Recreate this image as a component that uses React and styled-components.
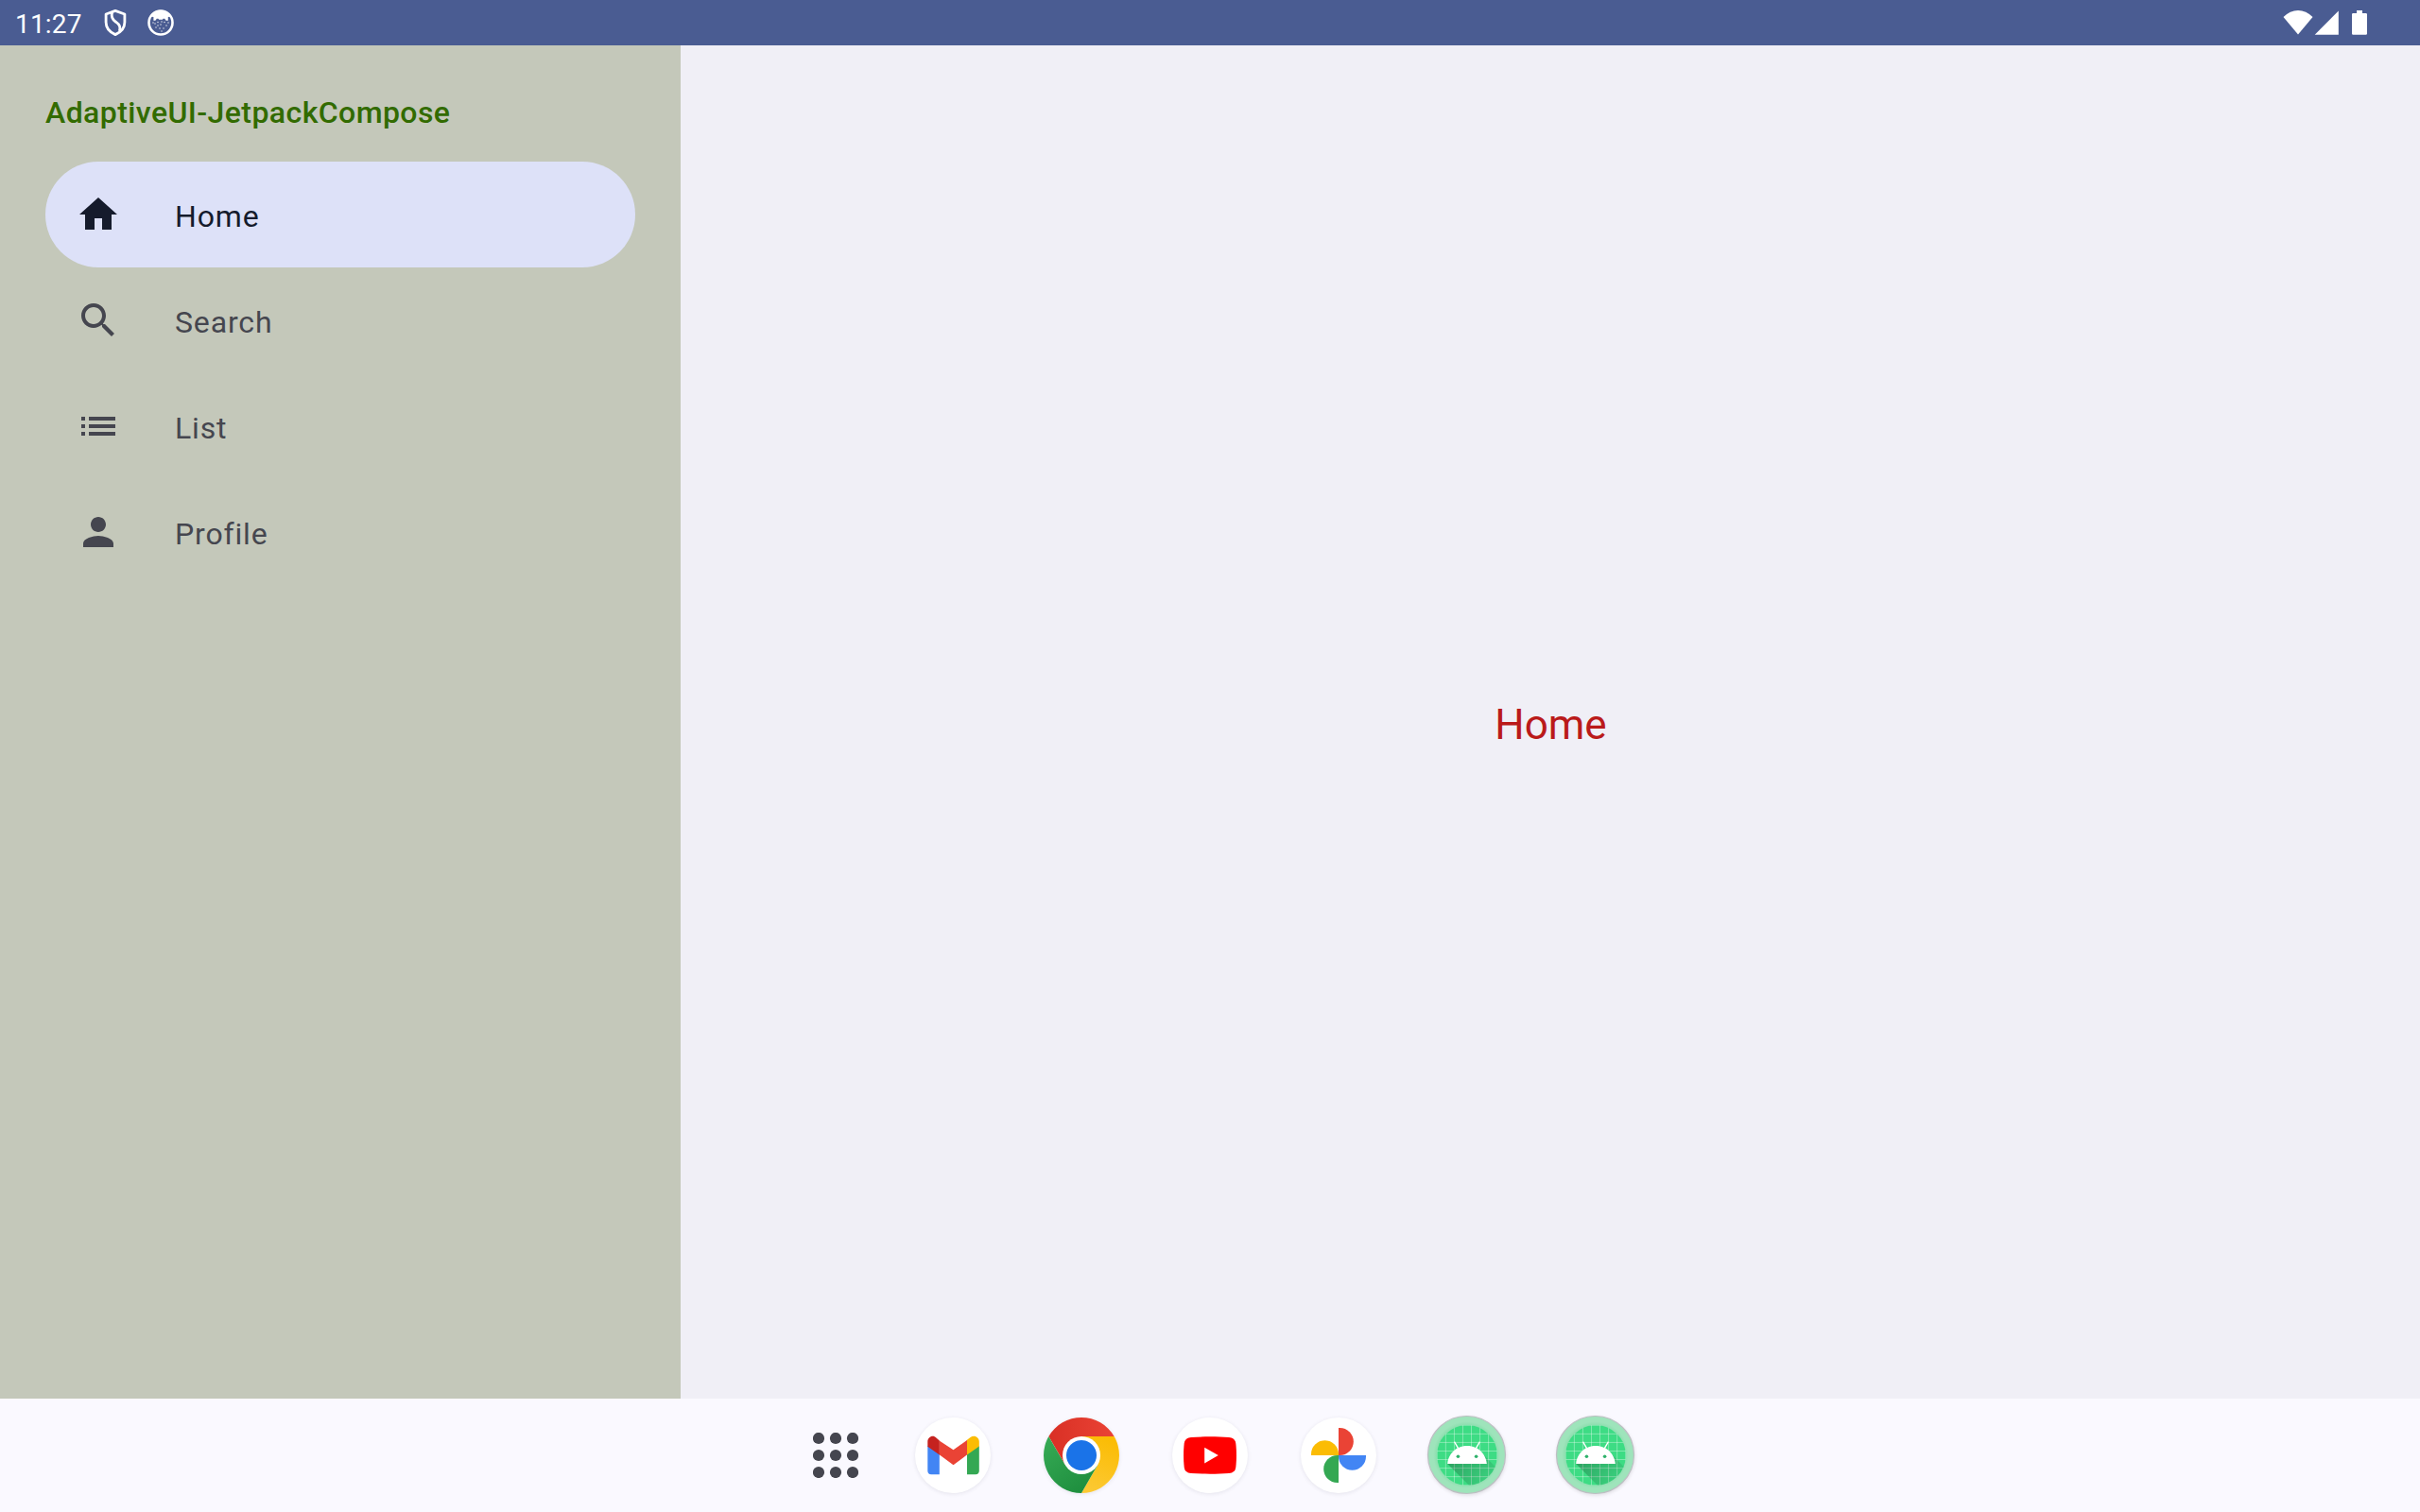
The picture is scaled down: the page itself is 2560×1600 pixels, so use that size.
import React from "react";
import styled, { createGlobalStyle } from "styled-components";

const GlobalStyle = createGlobalStyle`
  * { box-sizing: border-box; }
  body {
    margin: 0;
    font-family: Roboto, "Noto Sans", sans-serif;
    overflow: hidden;
  }
  svg { display: block; flex: none; }
`;

const Screen = styled.div`
  width: 2560px;
  height: 1600px;
  display: flex;
  flex-direction: column;
  background: #f0eff6;
`;

const StatusBar = styled.header`
  height: 48px;
  flex: none;
  display: flex;
  align-items: center;
  justify-content: space-between;
  padding: 0 56px 0 16px;
  background: #4a5c92;
  color: #fff;
`;

const StatusGroup = styled.div`
  display: flex;
  align-items: center;
`;

const Clock = styled.span`
  width: 94px;
  padding-top: 3px;
  font-size: 28px;
  line-height: 45px;
  letter-spacing: 0.2px;
`;

const Notifications = styled.div`
  display: flex;
  gap: 22px;
`;

const Body = styled.div`
  flex: 1;
  display: flex;
  min-height: 0;
`;

const Drawer = styled.nav`
  width: 720px;
  padding: 47px 48px;
  background: #c4c8ba;
`;

const DrawerTitle = styled.h1`
  margin: 0;
  padding: 0 0 28px;
  font-size: 32px;
  line-height: 48px;
  font-weight: 500;
  letter-spacing: 0.42px;
  color: #326b00;
`;

const DrawerItem = styled.div`
  height: 112px;
  display: flex;
  align-items: center;
  gap: 57px;
  padding: 0 32px;
  border-radius: 56px;
  background: ${(p) => (p.$active ? "#dde1f8" : "transparent")};
  color: ${(p) => (p.$active ? "#151b2c" : "#45464f")};
`;

const ItemLabel = styled.span`
  padding-top: 4px;
  font-size: 32px;
  line-height: 48px;
  letter-spacing: 0.85px;
`;

const Content = styled.main`
  flex: 1;
  display: flex;
  align-items: center;
  justify-content: center;
`;

const ContentText = styled.p`
  margin: 0;
  padding: 5px 0 0 1px;
  font-size: 44px;
  line-height: 56px;
  color: #ba1a1a;
`;

const Dock = styled.footer`
  height: 120px;
  flex: none;
  display: flex;
  align-items: center;
  gap: 56px;
  padding-left: 860px;
  background: #faf9ff;
`;

const AppsButton = styled.div`
  width: 52px;
  display: flex;
`;

const AppIcon = styled.div`
  width: 80px;
  height: 80px;
  display: flex;
  align-items: center;
  justify-content: center;
  border-radius: 50%;
  background: ${(p) => (p.$bare ? "transparent" : "#fff")};
  box-shadow: ${(p) => (p.$bare ? "0 1px 4px 1px rgba(0, 0, 0, 0.14)" : "0 1px 4px rgba(40, 40, 70, 0.1)")};
`;

const itemPaths = {
  Home: "M10 20v-6h4v6h5v-8h3L12 3 2 12h3v8z",
  Search:
    "M15.5 14h-.79l-.28-.27C15.41 12.59 16 11.11 16 9.5 16 5.91 13.09 3 9.5 3S3 5.91 3 9.5 5.91 16 9.5 16c1.61 0 3.09-.59 4.23-1.57l.27.28v.79l5 4.99L20.49 19l-4.99-5zm-6 0C7.01 14 5 11.99 5 9.5S7.01 5 9.5 5 14 7.01 14 9.5 11.99 14 9.5 14z",
  List: "M3 13h2v-2H3v2zm0 4h2v-2H3v2zm0-8h2V7H3v2zm4 4h14v-2H7v2zm0 4h14v-2H7v2zM7 7v2h14V7H7z",
  Profile:
    "M12 12c2.21 0 4-1.79 4-4s-1.79-4-4-4-4 1.79-4 4 1.79 4 4 4zm0 2c-2.67 0-8 1.34-8 4v2h16v-2c0-2.66-5.33-4-8-4z",
};

function ShieldIcon() {
  return (
    <svg width="24" height="30" viewBox="0 0 24 30" fill="none" stroke="#fff" strokeWidth="2.8" strokeLinejoin="round">
      <path d="M12 2.4 L21.9 6 V14.5 C21.9 20.5 18 25 12 27.6 C6 25 2.1 20.5 2.1 14.5 V6 Z" />
      <path d="M8.6 4.2 C7.2 9.2 9 12 12.5 14.2 C16.6 17 18.2 19.6 16.3 24" />
    </svg>
  );
}

const specks = [
  [8, 16], [11, 14.5], [14, 17], [18, 14.5], [20, 18], [9, 20], [13, 21], [17, 21], [15, 24], [6, 15], [22, 15], [11, 18], [15, 14],
];

function CatIcon() {
  return (
    <svg width="28" height="30" viewBox="0 0 28 30">
      <circle cx="14" cy="15" r="12.5" fill="none" stroke="#fff" strokeWidth="2.6" />
      <path
        d="M3.2 8.6 C6 3.4 10 1.8 14 1.8 C18 1.8 22 3.4 24.8 8.6 L21.8 9 V12.8 H19.6 L18.2 10.8 H16.6 L15.8 11.7 H12.2 L11.4 10.8 H9.8 L8.4 12.8 H6.4 V9 Z"
        fill="#fff"
      />
      {specks.map(([x, y]) => (
        <circle key={`${x}-${y}`} cx={x} cy={y} r="0.68" fill="#fff" fillOpacity="0.9" />
      ))}
    </svg>
  );
}

function SystemIcons() {
  return (
    <svg width="89" height="48" viewBox="2415 0 89 48" fill="#fff">
      <path d="M2431 36.6 L2415.5 18 C2424.5 8.8 2437.5 8.8 2446.5 18 Z" />
      <path d="M2448.7 36.7 L2473.8 11.6 V36.7 Z" />
      <path d="M2493 11 h6 v3 h3.7 a1.3 1.3 0 0 1 1.3 1.3 v20.1 a1.3 1.3 0 0 1 -1.3 1.3 h-13.4 a1.3 1.3 0 0 1 -1.3 -1.3 v-20.1 a1.3 1.3 0 0 1 1.3 -1.3 h3.7 z" />
    </svg>
  );
}

function AppsIcon() {
  const steps = [6, 24, 42];
  return (
    <svg width="48" height="48" fill="#45464f">
      {steps.flatMap((y) => steps.map((x) => <circle key={`${x}-${y}`} cx={x} cy={y} r="6.1" />))}
    </svg>
  );
}

function GmailIcon() {
  return (
    <svg width="80" height="80" viewBox="-40 -40 80 80">
      <path d="M-26.7 -10 V16.5 A3.8 3.8 0 0 0 -22.9 20.2 H-14.2 V-2 Z" fill="#4285f4" />
      <path d="M27.8 -10 V16.5 A3.8 3.8 0 0 1 24 20.2 H15 V-2 Z" fill="#34a853" />
      <path d="M-14.4 -15.5 L0.5 -5.7 L15.2 -16.2 V-0.7 L0.5 10.3 L-14.4 -0.7 Z" fill="#ea4335" />
      <path d="M15 -16.2 L18.5 -19 C22.5 -22.2 27.8 -19.3 27.8 -14.5 V-9.6 L15 -0.5 Z" fill="#fbbc04" />
      <path d="M-14.2 -15.4 L-17.6 -18.6 C-21.2 -22.3 -26.7 -19.3 -26.7 -14.5 V-9.3 L-14.2 -0.5 Z" fill="#c5221f" />
    </svg>
  );
}

function ChromeIcon() {
  return (
    <svg width="80" height="80" viewBox="-40 -40 80 80">
      <defs>
        <linearGradient id="chromeRed" x1="0" x2="1">
          <stop offset="0" stopColor="#d93025" />
          <stop offset="1" stopColor="#ea4335" />
        </linearGradient>
        <linearGradient id="chromeYellow" x1="0.3" y1="1" x2="0.6" y2="0">
          <stop offset="0" stopColor="#fcc934" />
          <stop offset="1" stopColor="#fbbc04" />
        </linearGradient>
        <linearGradient id="chromeGreen" x1="0.7" y1="1" x2="0.1" y2="0.1">
          <stop offset="0" stopColor="#1e8e3e" />
          <stop offset="1" stopColor="#34a853" />
        </linearGradient>
      </defs>
      <path d="M-34.64 -20 A40 40 0 0 1 34.64 -20 H0 L-17.32 10 Z" fill="url(#chromeRed)" />
      <path d="M34.64 -20 A40 40 0 0 1 0 40 L17.32 10 L0 -20 Z" fill="url(#chromeYellow)" />
      <path d="M0 40 A40 40 0 0 1 -34.64 -20 L-17.32 10 L17.32 10 Z" fill="url(#chromeGreen)" />
      <circle r="20" fill="#fff" />
      <circle r="16" fill="#1a73e8" />
    </svg>
  );
}

function YouTubeIcon() {
  return (
    <svg width="80" height="80" viewBox="-40 -40 80 80">
      <path d="M-20 -19 C-8 -19.9 8 -19.9 20 -19 C24.5 -18.6 26.8 -16.5 27.3 -12.5 C28.2 -5 28.2 5 27.3 12.5 C26.8 16.5 24.5 18.6 20 19 C8 19.9 -8 19.9 -20 19 C-24.5 18.6 -26.8 16.5 -27.3 12.5 C-28.2 5 -28.2 -5 -27.3 -12.5 C-26.8 -16.5 -24.5 -18.6 -20 -19Z" fill="#f00" />
      <path d="M-5.8 -8.3 L8.8 0.1 L-5.8 8.5 Z" fill="#fff" />
    </svg>
  );
}

const petals = [
  ["#ea4335", 0],
  ["#4285f4", 90],
  ["#34a853", 180],
  ["#fbbc04", 270],
];

function PhotosIcon() {
  return (
    <svg width="80" height="80" viewBox="-40 -40 80 80">
      {petals.map(([color, angle]) => (
        <path key={angle} transform={`rotate(${angle})`} fill={color} d="M0 -29 H1.3 A14.5 14.5 0 0 1 1.3 0 H0 Z" />
      ))}
    </svg>
  );
}

function AndroidIcon({ id }) {
  const lines = [19, 29, 39, 49, 59, 69, 79, 89];
  return (
    <svg width="86" height="86" viewBox="-43 -43 86 86">
      <defs>
        <clipPath id={`${id}-clip`}>
          <circle cx="54" cy="54" r="35.3" />
        </clipPath>
        <linearGradient id={`${id}-shade`} gradientUnits="userSpaceOnUse" x1="42.9492" y1="49.59793" x2="85.84757" y2="92.4963">
          <stop offset="0" stopColor="#000" stopOpacity="0.267" />
          <stop offset="1" stopColor="#000" stopOpacity="0" />
        </linearGradient>
        <radialGradient id={`${id}-halo`}>
          <stop offset="0.78" stopColor="#8fdfb0" />
          <stop offset="0.86" stopColor="#9ee4bb" />
        </radialGradient>
      </defs>
      <circle cx="-0.5" cy="-0.5" r="41" fill={`url(#${id}-halo)`} stroke="#bdbfc3" strokeWidth="1.2" />
      <g transform="scale(0.906) translate(-54 -54)" clipPath={`url(#${id}-clip)`}>
        <rect width="108" height="108" fill="#3ddc84" />
        {lines.map((n) => (
          <path key={n} d={`M${n} 0V108M0 ${n}H108`} stroke="#fff" strokeOpacity="0.42" strokeWidth="0.95" />
        ))}
        <path fill={`url(#${id}-shade)`} d="M31 63.928c0 0 6.4-11 12.1-13.1 7.2-2.6 26-1.4 26-1.4l38.1 38.1L107 108.928l-32-1L31 63.928z" />
        <path
          fill="#fff"
          d="M65.3 45.828l3.8-6.6c.2-.4.1-.9-.3-1.1-.4-.2-.9-.1-1.1.3l-3.9 6.7c-6.3-2.8-13.4-2.8-19.7 0l-3.9-6.7c-.2-.4-.7-.5-1.1-.3-.4.2-.5.7-.3 1.1l3.8 6.6C36.2 49.428 31.7 56.028 31 63.928h46C76.3 56.028 71.8 49.428 65.3 45.828z"
        />
        <circle cx="43.4" cy="55.4" r="2" fill="#30b26c" />
        <circle cx="64.6" cy="55.4" r="2" fill="#30b26c" />
      </g>
    </svg>
  );
}

export default function App() {
  return (
    <Screen>
      <GlobalStyle />
      <StatusBar>
        <StatusGroup>
          <Clock>11:27</Clock>
          <Notifications>
            <ShieldIcon />
            <CatIcon />
          </Notifications>
        </StatusGroup>
        <SystemIcons />
      </StatusBar>
      <Body>
        <Drawer>
          <DrawerTitle>AdaptiveUI-JetpackCompose</DrawerTitle>
          {Object.entries(itemPaths).map(([name, d]) => (
            <DrawerItem key={name} $active={name === "Home"}>
              <svg width="48" height="48" viewBox="0 0 24 24" fill="currentColor">
                <path d={d} />
              </svg>
              <ItemLabel>{name}</ItemLabel>
            </DrawerItem>
          ))}
        </Drawer>
        <Content>
          <ContentText>Home</ContentText>
        </Content>
      </Body>
      <Dock>
        <AppsButton>
          <AppsIcon />
        </AppsButton>
        <AppIcon><GmailIcon /></AppIcon>
        <AppIcon><ChromeIcon /></AppIcon>
        <AppIcon><YouTubeIcon /></AppIcon>
        <AppIcon><PhotosIcon /></AppIcon>
        <AppIcon $bare><AndroidIcon id="droid-a" /></AppIcon>
        <AppIcon $bare><AndroidIcon id="droid-b" /></AppIcon>
      </Dock>
    </Screen>
  );
}
